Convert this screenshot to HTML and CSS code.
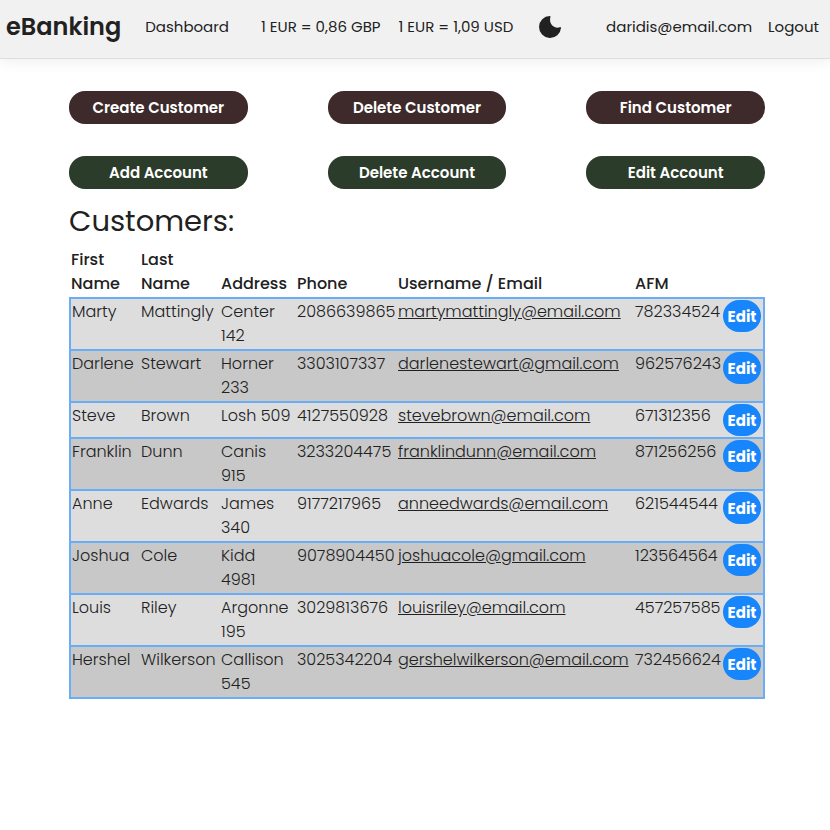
FILE: index.html
```html
<!DOCTYPE html>
<html lang="en">
<head>
<meta charset="utf-8">
<meta name="viewport" content="width=device-width, initial-scale=1">
<title>eBanking</title>
<link rel="stylesheet" href="styles.css">
</head>
<body>
<header class="navbar">
  <a class="brand" href="#">eBanking</a>
  <nav class="nav-main"><a href="#">Dashboard</a></nav>
  <div class="rates"><span>1 EUR = 0,86 GBP</span><span>1 EUR = 1,09 USD</span></div>
  <button class="theme-toggle" type="button" aria-label="Toggle dark mode">
    <svg viewBox="0 0 22 22" width="22" height="22" aria-hidden="true"><path fill="#212121" d="M10.8 0A11 11 0 1 0 22 11.900Q21.900 10.700 20.800 11.200C15.500 13.200 9.500 8 11.400 1.200Q11.700 0 10.800 0Z"/></svg>
  </button>
  <nav class="nav-user"><a href="#">daridis@email.com</a><a href="#">Logout</a></nav>
</header>
<main class="content">
  <div class="actions">
    <button class="pill customer" type="button">Create Customer</button>
    <button class="pill customer" type="button">Delete Customer</button>
    <button class="pill customer" type="button">Find Customer</button>
    <button class="pill account" type="button">Add Account</button>
    <button class="pill account" type="button">Delete Account</button>
    <button class="pill account" type="button">Edit Account</button>
  </div>
  <h1 class="title">Customers:</h1>
  <table class="customers">
    <colgroup><col class="c-first"><col class="c-last"><col class="c-address"><col class="c-phone"><col class="c-email"><col class="c-afm"><col class="c-edit"></colgroup>
    <thead>
      <tr><th>First<br>Name</th><th>Last<br>Name</th><th>Address</th><th>Phone</th><th>Username / Email</th><th>AFM</th><td></td></tr>
    </thead>
    <tbody>
      <tr><td>Marty</td><td>Mattingly</td><td>Center<br>142</td><td>2086639865</td><td><a href="#">martymattingly@email.com</a></td><td>782334524</td><td><button class="edit" type="button">Edit</button></td></tr>
      <tr><td>Darlene</td><td>Stewart</td><td>Horner<br>233</td><td>3303107337</td><td><a href="#">darlenestewart@gmail.com</a></td><td>962576243</td><td><button class="edit" type="button">Edit</button></td></tr>
      <tr><td>Steve</td><td>Brown</td><td>Losh 509</td><td>4127550928</td><td><a href="#">stevebrown@email.com</a></td><td>671312356</td><td><button class="edit" type="button">Edit</button></td></tr>
      <tr><td>Franklin</td><td>Dunn</td><td>Canis<br>915</td><td>3233204475</td><td><a href="#">franklindunn@email.com</a></td><td>871256256</td><td><button class="edit" type="button">Edit</button></td></tr>
      <tr><td>Anne</td><td>Edwards</td><td>James<br>340</td><td>9177217965</td><td><a href="#">anneedwards@email.com</a></td><td>621544544</td><td><button class="edit" type="button">Edit</button></td></tr>
      <tr><td>Joshua</td><td>Cole</td><td>Kidd<br>4981</td><td>9078904450</td><td><a href="#">joshuacole@gmail.com</a></td><td>123564564</td><td><button class="edit" type="button">Edit</button></td></tr>
      <tr><td>Louis</td><td>Riley</td><td>Argonne<br>195</td><td>3029813676</td><td><a href="#">louisriley@email.com</a></td><td>457257585</td><td><button class="edit" type="button">Edit</button></td></tr>
      <tr><td>Hershel</td><td>Wilkerson</td><td>Callison<br>545</td><td>3025342204</td><td><a href="#">gershelwilkerson@email.com</a></td><td>732456624</td><td><button class="edit" type="button">Edit</button></td></tr>
    </tbody>
  </table>
</main>
</body>
</html>
```
FILE: styles.css
```css
* { box-sizing: border-box; }

body {
  margin: 0;
  background: #fff;
  color: #212121;
  font: 300 16px/24px Poppins, Inter, "Open Sans", sans-serif;
}

a { color: inherit; }
button { font-family: inherit; border: 0; cursor: pointer; }

.navbar {
  display: flex;
  align-items: center;
  padding: 0 11px 4px 6px;
  min-height: 59px;
  background: #f1f1f1;
  border-bottom: 1px solid #dedede;
  box-shadow: 0 4px 12px rgba(0, 0, 0, 0.06);
  font-size: 15px;
  font-weight: 400;
  white-space: nowrap;
}
.navbar a { text-decoration: none; }
.navbar .brand { font-size: 24px; font-weight: 600; }
.nav-main { margin-left: 24px; }
.rates { display: flex; gap: 18px; margin-left: 32px; }
.theme-toggle { display: flex; margin-left: 26px; padding: 0; background: none; }
.nav-user { display: flex; gap: 16px; margin-left: auto; }

.content { padding: 32px 65px 32px 69px; }

.actions {
  display: grid;
  grid-template-columns: repeat(3, 1fr);
  gap: 32px 80px;
}
.pill {
  height: 33px;
  padding: 0 8px;
  border-radius: 16px;
  color: #fff;
  font-size: 15px;
  font-weight: 600;
}
.customer { background: #3e2a2b; }
.account { background: #2c3c2a; }

.title {
  margin: 12px 0 6px;
  font-size: 29px;
  font-weight: 400;
  line-height: 40px;
}

.customers {
  width: 100%;
  table-layout: fixed;
  border-collapse: collapse;
  white-space: nowrap;
}
.c-first { width: 70px; }
.c-last { width: 80px; }
.c-address { width: 76px; }
.c-phone { width: 101px; }
.c-email { width: 237px; }
.c-afm { width: 88px; }

th, td { padding: 1px; text-align: left; }
th { font-weight: 500; vertical-align: bottom; }
tbody td { vertical-align: top; }
tbody tr { background: #ddd; border: 2px solid #69adf6; }
tbody tr:nth-child(even) { background: #c8c8c8; }

.edit {
  display: block;
  width: 38px;
  height: 32px;
  padding: 0;
  border-radius: 16px;
  background: #1785fb;
  color: #fff;
  font-size: 15px;
  font-weight: 700;
}
```
